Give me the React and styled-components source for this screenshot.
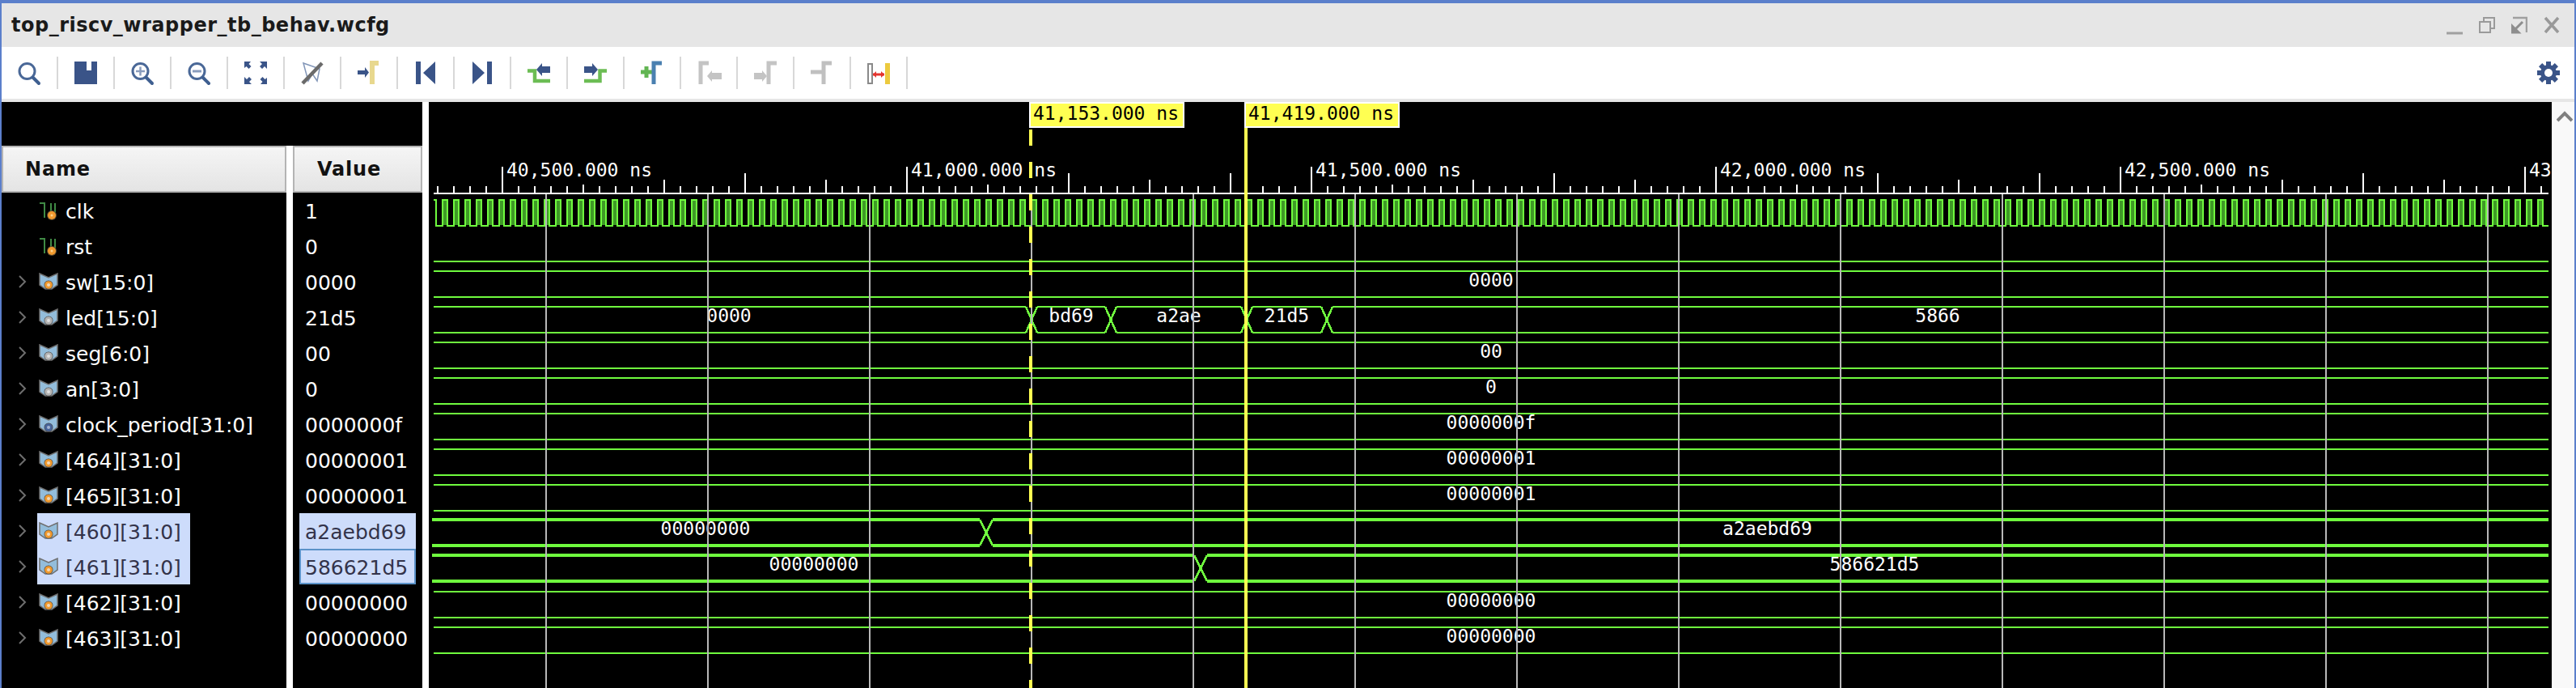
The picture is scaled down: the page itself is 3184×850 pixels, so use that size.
import React from 'react';
import styled, { createGlobalStyle } from 'styled-components';

const NAVY = '#3a5488';
const GREEN = '#6ffb3e';
const DARK_GREEN = '#3f9a27';
const CURSOR = '#ffff52';
const GRID = '#b8b8b8';
const SANS = '"DejaVu Sans", "Noto Sans", sans-serif';
const MONO = '"DejaVu Sans Mono", "Liberation Mono", monospace';

const GlobalStyle = createGlobalStyle`
  html, body {
    margin: 0;
    padding: 0;
    background: #fff;
    overflow: hidden;
  }
`;

const signals = [
  { name: 'clk', value: '1', kind: 'logic' },
  { name: 'rst', value: '0', kind: 'logic' },
  { name: 'sw[15:0]', value: '0000', kind: 'in' },
  { name: 'led[15:0]', value: '21d5', kind: 'out' },
  { name: 'seg[6:0]', value: '00', kind: 'out' },
  { name: 'an[3:0]', value: '0', kind: 'out' },
  { name: 'clock_period[31:0]', value: '0000000f', kind: 'const' },
  { name: '[464][31:0]', value: '00000001', kind: 'in' },
  { name: '[465][31:0]', value: '00000001', kind: 'in' },
  { name: '[460][31:0]', value: 'a2aebd69', kind: 'in', selected: true },
  { name: '[461][31:0]', value: '586621d5', kind: 'in', selected: true, focused: true },
  { name: '[462][31:0]', value: '00000000', kind: 'in' },
  { name: '[463][31:0]', value: '00000000', kind: 'in' },
];

// row index, transitions and the text of each segment
const buses = [
  { row: 2, labels: ['0000'] },
  { row: 3, edges: [1275, 1373, 1541, 1640], labels: ['0000', 'bd69', 'a2ae', '21d5', '5866'], at: [901] },
  { row: 4, labels: ['00'] },
  { row: 5, labels: ['0'] },
  { row: 6, labels: ['0000000f'] },
  { row: 7, labels: ['00000001'] },
  { row: 8, labels: ['00000001'] },
  { row: 9, edges: [1219], labels: ['00000000', 'a2aebd69'], thick: true, at: [872] },
  { row: 10, edges: [1484], labels: ['00000000', '586621d5'], thick: true, at: [1006] },
  { row: 11, labels: ['00000000'] },
  { row: 12, labels: ['00000000'] },
];

const WAVE_LEFT = 536;
const WAVE_RIGHT = 3150;

const Window = styled.div`
  box-sizing: border-box;
  width: 3184px;
  height: 850px;
  display: flex;
  flex-direction: column;
  border-style: solid;
  border-color: #5b7fcb;
  border-width: 4px 2px 0 2px;
  font-family: ${SANS};
`;

const TitleBar = styled.div`
  height: 54px;
  flex: none;
  display: flex;
  align-items: center;
  padding: 0 18px 0 12px;
  background: #e6e6e6;
`;

const Title = styled.div`
  font-size: 24px;
  font-weight: 700;
  color: #1a1a1a;
  letter-spacing: 0.5px;
  flex: 1;
`;

const WindowButtons = styled.div`
  display: flex;
  gap: 20px;
`;

const Toolbar = styled.div`
  height: 64px;
  flex: none;
  box-sizing: content-box;
  display: flex;
  align-items: center;
  background: #fff;
  border-bottom: 4px solid #e6e6e6;
`;

const ToolButton = styled.div`
  box-sizing: border-box;
  width: 70px;
  height: 40px;
  display: flex;
  align-items: center;
  justify-content: center;
  padding-right: 1px;
  border-right: 2px solid #d8d8d8;
`;

const Gear = styled.div`
  margin-left: auto;
  margin-right: 18px;
  width: 28px;
  height: 28px;
`;

const Body = styled.div`
  flex: 1;
  display: flex;
  min-height: 0;
`;

const SignalPane = styled.div`
  width: 520px;
  flex: none;
  display: flex;
  flex-direction: column;
  background: #000;
`;

const PaneTop = styled.div`
  height: 54px;
  flex: none;
`;

const Columns = styled.div`
  flex: 1;
  display: flex;
`;

const Column = styled.div`
  width: ${(p) => p.$width}px;
  flex: none;
`;

const Sash = styled.div`
  width: 8px;
  flex: none;
  background: #fff;
`;

const HeaderCell = styled.div`
  box-sizing: border-box;
  height: 58px;
  display: flex;
  align-items: center;
  padding-left: ${(p) => p.$pad}px;
  border: 2px solid #b4b4b4;
  background: linear-gradient(#f5f5f5, #e4e4e4);
  font-size: 24px;
  font-weight: 700;
  color: #111;
  letter-spacing: 0.8px;
`;

const NameRow = styled.div`
  height: 44px;
  display: flex;
  align-items: center;
`;

const ChevronSlot = styled.div`
  box-sizing: border-box;
  width: 44px;
  flex: none;
  display: flex;
  justify-content: center;
  padding-left: 8px;
`;

const NameLabel = styled.div`
  box-sizing: border-box;
  height: 44px;
  display: flex;
  align-items: center;
  gap: 9px;
  padding: 2px 11px 0 2px;
  font-size: 25px;
  white-space: nowrap;
  color: ${(p) => (p.$selected ? '#33334a' : '#fff')};
  background: ${(p) => (p.$selected ? '#cddcfb' : 'transparent')};
`;

const ValueRow = styled.div`
  box-sizing: border-box;
  height: 44px;
  margin: 0 8px;
  padding: 2px 0 0 7px;
  display: flex;
  align-items: center;
  font-size: 25px;
  color: ${(p) => (p.$selected ? '#33334a' : '#fff')};
  background: ${(p) => (p.$selected ? '#cddcfb' : 'transparent')};
  box-shadow: ${(p) => (p.$focused ? 'inset 0 0 0 2px #5b92c8' : 'none')};
`;

const WavePane = styled.svg`
  width: 2624px;
  height: 724px;
  flex: none;
  display: block;
  background: #000;
`;

const MonoText = styled.text`
  font-family: ${MONO};
  font-size: 23px;
  fill: ${(p) => p.$color || '#fff'};
`;

const ScrollBar = styled.div`
  flex: 1;
  background: #f9f9f9;
  border-left: 2px solid #fff;
  padding: 11px 0 0 4px;
`;

const Svg = ({ w = 32, h = 32, children }) => (
  <svg width={w} height={h} viewBox={`0 0 ${w} ${h}`} style={{ display: 'block' }}>
    {children}
  </svg>
);

const Lens = ({ mark }) => (
  <Svg>
    <circle cx="13.5" cy="14" r="9.5" fill="none" stroke="#4a6897" strokeWidth="3" />
    <path d="M21 22l7 7" stroke="#3f5f90" strokeWidth="4" strokeLinecap="round" />
    {mark === 'plus' && <path d="M8 14h11M13.5 8.5v11" stroke="#8a9dbd" strokeWidth="2.5" />}
    {mark === 'minus' && <path d="M8 14h11" stroke="#8a9dbd" strokeWidth="3" />}
  </Svg>
);

const Marker = ({ x, color }) => <path d={`M${x + 2} 30V4h10`} fill="none" stroke={color} strokeWidth="5" />;

const toolIcons = [
  <Lens key="find" />,
  <Svg key="save">
    <path d="M2 2h15v11h6V2h7v28H2z" fill={NAVY} />
  </Svg>,
  <Lens key="in" mark="plus" />,
  <Lens key="out" mark="minus" />,
  <Svg key="fit">
    <path d="M2 2h8L7.5 5l3 3-3 3-3-3L2 10zM30 2h-9l3 3-3 3 3 3 3-3 3 3zM2 30v-9l3 3 3-3 3 3-3 3 3 3zM30 30h-8l2.500-3-3-3 3-3 3 3 2.500-2z" fill={NAVY} />
  </Svg>,
  <Svg key="nosnap">
    <path d="M5 4l6 22 5-9 6 9 3-15L5 4z" fill="none" stroke="#8296b8" strokeWidth="1.500" />
    <path d="M28 4L4 29" stroke="#6a6a6a" strokeWidth="4.500" />
  </Svg>,
  <Svg key="tocursor">
    <path d="M2 13h9V9l5 6.500-5 6.500v-4H2z" fill={NAVY} />
    <path d="M20 30V4h8" fill="none" stroke="#e8d88e" strokeWidth="6" />
  </Svg>,
  <Svg key="start">
    <path d="M4 2h6v28H4zM28 2v28L13 16z" fill={NAVY} />
  </Svg>,
  <Svg key="end">
    <path d="M4 2v28l15-14zM22 2h6v28h-6z" fill={NAVY} />
  </Svg>,
  <Svg key="prev">
    <path d="M2 13.500h9V26h19" fill="none" stroke="#6cbd54" strokeWidth="4.500" />
    <path d="M30 8v8H20v4l-7-8 7-8v4z" fill={NAVY} />
  </Svg>,
  <Svg key="next">
    <path d="M2 26h19.500V13.500H30" fill="none" stroke="#6cbd54" strokeWidth="4.500" />
    <path d="M2 8v8h10v4l7-8-7-8v4z" fill={NAVY} />
  </Svg>,
  <Svg key="add">
    <path d="M2 15h14M9 8v14" stroke="#62b552" strokeWidth="5" />
    <Marker x={16} color="#4a80b0" />
  </Svg>,
  <Svg key="prevmark">
    <Marker x={4} color="#c4c4c4" />
    <path d="M32 16v8H20v3l-6-7 6-7v3z" fill="#c4c4c4" />
  </Svg>,
  <Svg key="nextmark">
    <path d="M2 16v8h10v3l6-7-6-7v3z" fill="#c4c4c4" />
    <Marker x={18} color="#c4c4c4" />
  </Svg>,
  <Svg key="delmark">
    <path d="M2 15h14" stroke="#c0c0c0" strokeWidth="5" />
    <Marker x={16} color="#c0c0c0" />
  </Svg>,
  <Svg key="swap">
    <rect x="3" y="5" width="5" height="24" fill="none" stroke="#8a8a8a" strokeWidth="2" />
    <rect x="24" y="4" width="6" height="26" fill="#ecca3e" />
    <path d="M9 18h14" stroke="#e4332d" strokeWidth="3" />
    <path d="M13 14l-4 4 4 4zM19 14l4 4-4 4z" fill="#e4332d" />
  </Svg>,
];

const GearIcon = () => (
  <Svg w={28} h={28}>
    {[0, 45, 90, 135].map((a) => (
      <rect key={a} x="11" y="0" width="6" height="28" fill={NAVY} transform={`rotate(${a} 14 14)`} />
    ))}
    <circle cx="14" cy="14" r="10" fill={NAVY} />
    <circle cx="14" cy="14" r="5" fill="#fff" />
  </Svg>
);

const WindowIcons = () => (
  <WindowButtons>
    <Svg w={20} h={24}>
      <path d="M0 22h20" stroke="#a0a0a0" strokeWidth="3" />
    </Svg>
    <Svg w={20} h={24}>
      <path d="M6 8V3h13v13h-5" fill="none" stroke="#9a9a9a" strokeWidth="2" />
      <rect x="1" y="8" width="13" height="13" fill="none" stroke="#9a9a9a" strokeWidth="2" />
    </Svg>
    <Svg w={20} h={24}>
      <path d="M2 3h17v18" fill="none" stroke="#a0a0a0" strokeWidth="2.500" />
      <path d="M14 8L4 18M1 13v8h8z" stroke="#8e8e8e" strokeWidth="3" fill="#8e8e8e" />
    </Svg>
    <Svg w={20} h={24}>
      <path d="M2 3l16 18M18 3L2 21" stroke="#999" strokeWidth="3.500" />
    </Svg>
  </WindowButtons>
);

const Chevron = () => (
  <Svg w={12} h={16}>
    <path d="M2 1l7 7-7 7" fill="none" stroke="#6e6e6e" strokeWidth="2" />
  </Svg>
);

const bulbColors = { in: '#f19a2e', out: '#b4b4b4', const: '#47649a' };

const SignalIcon = ({ kind }) =>
  kind === 'logic' ? (
    <Svg w={24} h={24}>
      <path d="M1 2h6v18M15 2v14M20 2v14" fill="none" stroke="#3f8a45" strokeWidth="2" />
      <circle cx="16" cy="17" r="6" fill="#5a4a30" />
      <circle cx="16" cy="17" r="5" fill="#f19a2e" />
      <circle cx="16" cy="17" r="1.500" fill="#fcd28f" />
    </Svg>
  ) : (
    <Svg w={24} h={24}>
      <path d="M1 1l11 5 11-5v14l-7 5H8l-7-5z" fill="#93bddb" stroke="#6f6f6f" strokeWidth="1.500" />
      <circle cx="12" cy="15" r="5.500" fill="#4a4a4a" />
      <circle cx="12" cy="15" r="4.800" fill={bulbColors[kind]} />
      <circle cx="12" cy="15" r="2" fill={kind === 'const' ? '#c9d4ea' : '#f2f2f2'} opacity="0.7" />
    </Svg>
  );

const range = (from, to, step) => {
  const out = [];
  for (let v = from; v <= to; v += step) out.push(v);
  return out;
};

const tickTop = (x) => {
  const ns = x - 621;
  if (ns % 500 === 0) return 206;
  if (ns % 100 !== 0) return 230;
  const hundreds = ((ns % 500) + 500) % 500;
  const halfSeries = ((Math.floor(ns / 500) % 2) + 2) % 2 === 0;
  if (hundreds === 100) return 228;
  if (halfSeries) return hundreds === 300 ? 214 : 222;
  return hundreds === 300 ? 222 : 214;
};

const ruler = [
  ['40,500.000 ns', 626],
  ['41,000.000 ns', 1126],
  ['41,500.000 ns', 1626],
  ['42,000.000 ns', 2126],
  ['42,500.000 ns', 2626],
  ['43', 3126],
];

const Ruler = () => (
  <g>
    <rect x={WAVE_LEFT} y="238" width={WAVE_RIGHT - WAVE_LEFT} height="2" fill="#fff" />
    {range(541, 3141, 20).map((x) => (
      <rect key={x} x={x - 1} y={tickTop(x)} width="2" height={238 - tickTop(x)} fill="#fff" />
    ))}
    {ruler.map(([text, x]) => (
      <MonoText key={text} x={x} y="218">
        {text}
      </MonoText>
    ))}
  </g>
);

const Clock = () => {
  const rises = range(547, 3137, 14);
  const line = `M${WAVE_LEFT} 247H539V279` + rises.map((x) => `H${x}V247H${x + 6}V279`).join('') + `H${WAVE_RIGHT}`;
  const fill = rises.map((x) => `M${x + 1} 248h4v30h-4z`).join('');
  return (
    <g>
      <path d={fill} fill={DARK_GREEN} />
      <path d={line} fill="none" stroke={GREEN} strokeWidth="2" />
    </g>
  );
};

const Bus = ({ row, edges = [], labels, thick, at = [] }) => {
  const top = thick ? 642 + 44 * (row - 9) : 247 + 44 * row;
  const bottom = top + 32;
  const half = thick ? 8 : 7;
  const start = thick ? 534 : WAVE_LEFT;
  const stops = [start, ...edges, WAVE_RIGHT];
  const lines = labels
    .map((_, i) => {
      const a = i === 0 ? start : stops[i] + half;
      const b = i === labels.length - 1 ? WAVE_RIGHT : stops[i + 1] - half;
      return `M${a} ${top}H${b}M${a} ${bottom}H${b}`;
    })
    .join('');
  const crosses = edges
    .map((c) => `M${c - half} ${top}L${c + half} ${bottom}M${c - half} ${bottom}L${c + half} ${top}`)
    .join('');
  return (
    <g>
      <path d={lines} fill="none" stroke={GREEN} strokeWidth={thick ? 4 : 2} />
      <path d={crosses} fill="none" stroke={GREEN} strokeWidth="2.500" />
      {labels.map((text, i) => (
        <MonoText key={i} x={at[i] || (stops[i] + stops[i + 1]) / 2} y={(top + bottom) / 2 + 3} textAnchor="middle">
          {text}
        </MonoText>
      ))}
    </g>
  );
};

const CursorFlag = ({ x, text }) => (
  <g>
    <rect x={x + 1} y="127" width="190" height="30" fill={CURSOR} stroke="#fff" strokeWidth="2" />
    <MonoText x={x + 5} y="148" $color="#000">
      {text}
    </MonoText>
  </g>
);

const Waves = () => (
  <WavePane viewBox="530 126 2624 724" shapeRendering="crispEdges">
    <Ruler />
    <Clock />
    <path d={`M${WAVE_LEFT} 323H${WAVE_RIGHT}`} stroke={GREEN} strokeWidth="2" />
    {buses.map((bus) => (
      <Bus key={bus.row} {...bus} />
    ))}
    {range(675, 3075, 200).map((x) => (
      <rect key={x} x={x - 1} y="240" width="2" height="610" fill={GRID} />
    ))}
    {range(160, 840, 40).map((y) => (
      <rect key={y} x="1272" y={y} width="4" height="20" fill={CURSOR} />
    ))}
    <rect x="1538" y="158" width="4" height="692" fill={CURSOR} />
    <CursorFlag x={1272} text="41,153.000 ns" />
    <CursorFlag x={1538} text="41,419.000 ns" />
  </WavePane>
);

export default function App() {
  return (
    <>
      <GlobalStyle />
      <Window>
        <TitleBar>
          <Title>top_riscv_wrapper_tb_behav.wcfg</Title>
          <WindowIcons />
        </TitleBar>
        <Toolbar>
          {toolIcons.map((icon) => (
            <ToolButton key={icon.key}>{icon}</ToolButton>
          ))}
          <Gear>
            <GearIcon />
          </Gear>
        </Toolbar>
        <Body>
          <SignalPane>
            <PaneTop />
            <Columns>
              <Column $width={352}>
                <HeaderCell $pad={27}>Name</HeaderCell>
                {signals.map((s) => (
                  <NameRow key={s.name}>
                    <ChevronSlot>{s.kind !== 'logic' && <Chevron />}</ChevronSlot>
                    <NameLabel $selected={s.selected}>
                      <SignalIcon kind={s.kind} />
                      {s.name}
                    </NameLabel>
                  </NameRow>
                ))}
              </Column>
              <Sash />
              <Column $width={160}>
                <HeaderCell $pad={28}>Value</HeaderCell>
                {signals.map((s) => (
                  <ValueRow key={s.name} $selected={s.selected} $focused={s.focused}>
                    {s.value}
                  </ValueRow>
                ))}
              </Column>
            </Columns>
          </SignalPane>
          <Sash />
          <Waves />
          <ScrollBar>
            <Svg w={20} h={14}>
              <path d="M1 12l9-9 9 9" fill="none" stroke="#808080" strokeWidth="4" />
            </Svg>
          </ScrollBar>
        </Body>
      </Window>
    </>
  );
}
